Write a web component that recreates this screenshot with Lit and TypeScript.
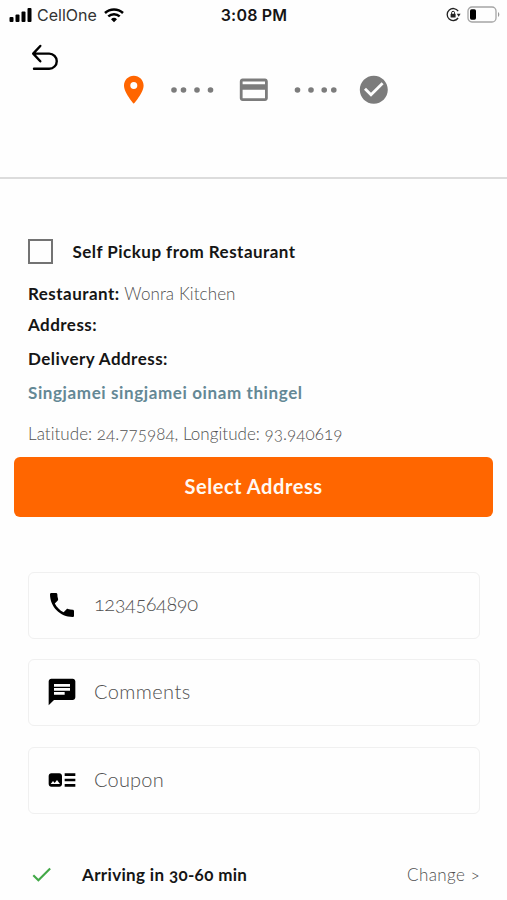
import { LitElement, html, css, svg } from "lit";
import { customElement } from "lit/decorators.js";

const glyphs = {
  pin: "M12 2C8.13 2 5 5.13 5 9c0 5.25 7 13 7 13s7-7.75 7-13c0-3.87-3.13-7-7-7zm0 9.5a2.5 2.5 0 1 1 0-5 2.5 2.5 0 0 1 0 5z",
  card: "M20 4H4c-1.11 0-1.99.89-1.99 2L2 18c0 1.11.89 2 2 2h16c1.11 0 2-.89 2-2V6c0-1.11-.89-2-2-2zm0 14H4v-6h16v6zm0-10H4V6h16v2z",
  done: "M12 2C6.48 2 2 6.48 2 12s4.48 10 10 10 10-4.48 10-10S17.52 2 12 2zm-2 15l-5-5 1.41-1.41L10 14.17l7.59-7.59L19 8l-9 9z",
  phone: "M6.62 10.79c1.44 2.83 3.76 5.14 6.59 6.59l2.2-2.2c.27-.27.67-.36 1.02-.24 1.12.37 2.33.57 3.57.57.55 0 1 .45 1 1V20c0 .55-.45 1-1 1-9.39 0-17-7.61-17-17 0-.55.45-1 1-1h3.5c.55 0 1 .45 1 1 0 1.25.2 2.45.57 3.57.11.35.03.74-.25 1.02l-2.2 2.2z",
  chat: "M20 2H4c-1.1 0-1.99.9-1.99 2L2 22l4-4h14c1.1 0 2-.9 2-2V4c0-1.1-.9-2-2-2zM6 9h12v2H6V9zm8 5H6v-2h8v2zm4-6H6V6h12v2z",
  track: "M22 13h-8v-2h8v2zm0-6h-8v2h8V7zm-8 10h8v-2h-8v2zm-2-8v6c0 1.1-.9 2-2 2H4c-1.1 0-2-.9-2-2V9c0-1.1.9-2 2-2h6c1.1 0 2 .9 2 2zm-1.5 6l-2.25-3-1.75 2.26-1.25-1.51L3.5 15h7z",
  tick: "M9 16.17L4.83 12l-1.42 1.41L9 19 21 7l-1.41-1.41z",
};

const icon = (name: keyof typeof glyphs, cls: string) =>
  html`<svg class="icon ${cls}" viewBox="0 0 24 24"><path d=${glyphs[name]} /></svg>`;

const dots = (xs: number[]) =>
  html`<svg class="dots" viewBox="0 0 44 8">${xs.map((x) => svg`<circle cx=${x} cy="4" r="2.8" />`)}</svg>`;

@customElement("app-root")
export class AppRoot extends LitElement {
  static styles = css`
    :host {
      display: block;
      height: 900px;
      overflow: hidden;
      background: #fefefe;
      color: #151515;
      font-family: Lato, "Open Sans", sans-serif;
      font-variant-numeric: oldstyle-nums;
      font-size: 17px;
    }
    svg { display: block; flex: none; }
    .icon { fill: currentColor; }
    .status {
      display: grid;
      grid-template-columns: 1fr auto 1fr;
      align-items: center;
      height: 30px;
      padding: 0 7px 0 9px;
      font-family: Inter, sans-serif;
      font-variant-numeric: normal;
    }
    .carrier { display: flex; align-items: center; font-size: 16px; color: #333; }
    .bars { width: 24px; height: 16px; margin: -1px 4px 0 0; }
    .wifi { width: 20px; height: 16px; margin: -1px 0 0 7px; }
    .clock { font-size: 16px; font-weight: 600; letter-spacing: 0.2px; margin-left: -1px; }
    .power { display: flex; justify-content: flex-end; align-items: center; gap: 6px; }
    .lock { width: 15px; height: 15px; margin-top: -1px; }
    .battery { width: 33px; height: 17px; margin-top: -2px; }
    .header { height: 147px; border-bottom: 2px solid #dcdcdc; }
    .back { width: 30px; height: 30px; padding: 12px 0 0 30px; }
    .steps {
      display: flex;
      align-items: center;
      justify-content: center;
      height: 34px;
      margin-top: 1px;
      color: #7c7c7c;
    }
    .step { width: 33.6px; height: 33.6px; }
    .pin { color: #ff6500; }
    .dots { width: 44px; height: 8px; margin: 0 21.2px; fill: #7c7c7c; overflow: visible; }
    .details { padding: 0 28px; margin-top: 55.5px; }
    .pickup { display: flex; align-items: center; gap: 20px; height: 34px; }
    .box { width: 20.5px; height: 20.5px; border: 2px solid #737373; }
    .line { line-height: 32px; white-space: pre; letter-spacing: 0.46px; }
    .strong { font-weight: 700; }
    .pickup .strong { letter-spacing: 0.47px; margin-top: -1px; }
    .restaurant { margin-top: 9.5px; }
    .restaurant .thin { letter-spacing: 0.1px; }
    .address { margin-top: -1px; }
    .delivery { margin-top: 2px; }
    .place { margin-top: 2px; color: #648895; letter-spacing: 0.61px; }
    .coords { margin-top: 8.5px; letter-spacing: 0.04px; }
    .thin { font-weight: 300; color: #505050; }
    .select {
      display: block;
      width: 479px;
      height: 60px;
      margin: 7.5px 14px 0;
      padding: 0 0 2px;
      border: 0;
      border-radius: 6px;
      background: #ff6600;
      color: #fff9f2;
      font: 700 20px Lato, sans-serif;
      letter-spacing: 0.56px;
    }
    .fields { display: grid; gap: 20.5px; margin: 54.5px 27px 0 28px; }
    .field {
      display: flex;
      align-items: center;
      gap: 16px;
      box-sizing: border-box;
      height: 67px;
      padding: 0 0 1px 17px;
      border: 1.5px solid #f0f0f0;
      border-radius: 6px;
      color: #000;
      font-size: 20px;
    }
    .field .thin { padding-bottom: 2px; }
    .field .phone-text { letter-spacing: -0.45px; padding-bottom: 4px; }
    .chat-text { letter-spacing: 0.4px; }
    .track-text { letter-spacing: 0.2px; }
    .lead { width: 32px; height: 32px; }
    .eta { display: flex; align-items: center; margin: 44px 27px 0 29px; height: 34px; }
    .tick { width: 25px; height: 25px; color: #43a948; }
    .when { margin-left: 28px; flex: 1; letter-spacing: 0.34px; }
    .change { letter-spacing: 0.42px; }
  `;

  private fields = [
    { icon: "phone", text: "1234564890" },
    { icon: "chat", text: "Comments" },
    { icon: "track", text: "Coupon" },
  ] as const;

  render() {
    return html`
      <div class="status">
        <div class="carrier">
          <svg class="bars" viewBox="0 0 24 16" fill="#000">
            <rect x="0.5" y="10" width="4" height="5" rx="1" /><rect x="6.5" y="7.5" width="4" height="7.5" rx="1" />
            <rect x="12.5" y="4.5" width="4" height="10.5" rx="1" /><rect x="18.5" y="1" width="4" height="14" rx="1" />
          </svg>
          <span>CellOne</span>
          <svg class="wifi" viewBox="0 0 20 16" fill="none" stroke="#000" stroke-width="2.5">
            <path d="M1 6a13 13 0 0 1 18 0M4.3 9.4a8.3 8.3 0 0 1 11.4 0" />
            <path d="M10 15.2l-3-3a4.3 4.3 0 0 1 6 0z" fill="#000" stroke="none" />
          </svg>
        </div>
        <span class="clock">3:08 PM</span>
        <div class="power">
          <svg class="lock" viewBox="0 0 15 15" fill="none" stroke="#222" stroke-width="1.3">
            <path d="M12.2 4.2A6 6 0 1 0 12.1 11" /><path d="M10.8 6.8h3.8l-1.9 2.9z" fill="#222" stroke="none" />
            <rect x="4.6" y="6.8" width="5" height="3.8" rx=".6" fill="#222" stroke="none" />
            <path d="M5.6 7V5.8a1.5 1.5 0 0 1 3 0V7" stroke-width="1" />
          </svg>
          <svg class="battery" viewBox="0 0 33 17">
            <rect x="1" y="1" width="28" height="15" rx="4" fill="none" stroke="#a5a5a5" stroke-width="1.3" />
            <rect x="3" y="3.3" width="6" height="10.4" rx="1.6" />
            <path d="M31 6v5q1.3-.6 1.3-2.5T31 6z" fill="#999" />
          </svg>
        </div>
      </div>
      <div class="header">
        <svg class="back" viewBox="0 0 30 30" fill="none" stroke="#000" stroke-width="2.4" stroke-linecap="round" stroke-linejoin="round">
          <path d="M10.3 4L3.2 11.6 10.3 19.3M3.4 11.6h15.8a7.5 7.5 0 0 1 0 15.1H4" />
        </svg>
        <div class="steps">
          ${icon("pin", "step pin")}${dots([2, 11.5, 25, 38.5])}${icon("card", "step")}${dots([6.5, 20, 33.2, 42.8])}${icon("done", "step")}
        </div>
      </div>
      <div class="details">
        <div class="pickup"><span class="box"></span><span class="strong">Self Pickup from Restaurant</span></div>
        <div class="line restaurant"><span class="strong">Restaurant:</span> <span class="thin">Wonra Kitchen</span></div>
        <div class="line strong address">Address:</div>
        <div class="line strong delivery">Delivery Address:</div>
        <div class="line strong place">Singjamei singjamei oinam thingel</div>
        <div class="line thin coords">Latitude: 24.775984, Longitude: 93.940619</div>
      </div>
      <button class="select">Select Address</button>
      <div class="fields">
        ${this.fields.map((f) => html`<div class="field">${icon(f.icon, "lead")}<span class="thin ${f.icon}-text">${f.text}</span></div>`)}
      </div>
      <div class="eta">
        ${icon("tick", "tick")}<span class="when strong">Arriving in 30-60 min</span><span class="thin change">Change &gt;</span>
      </div>
    `;
  }
}
